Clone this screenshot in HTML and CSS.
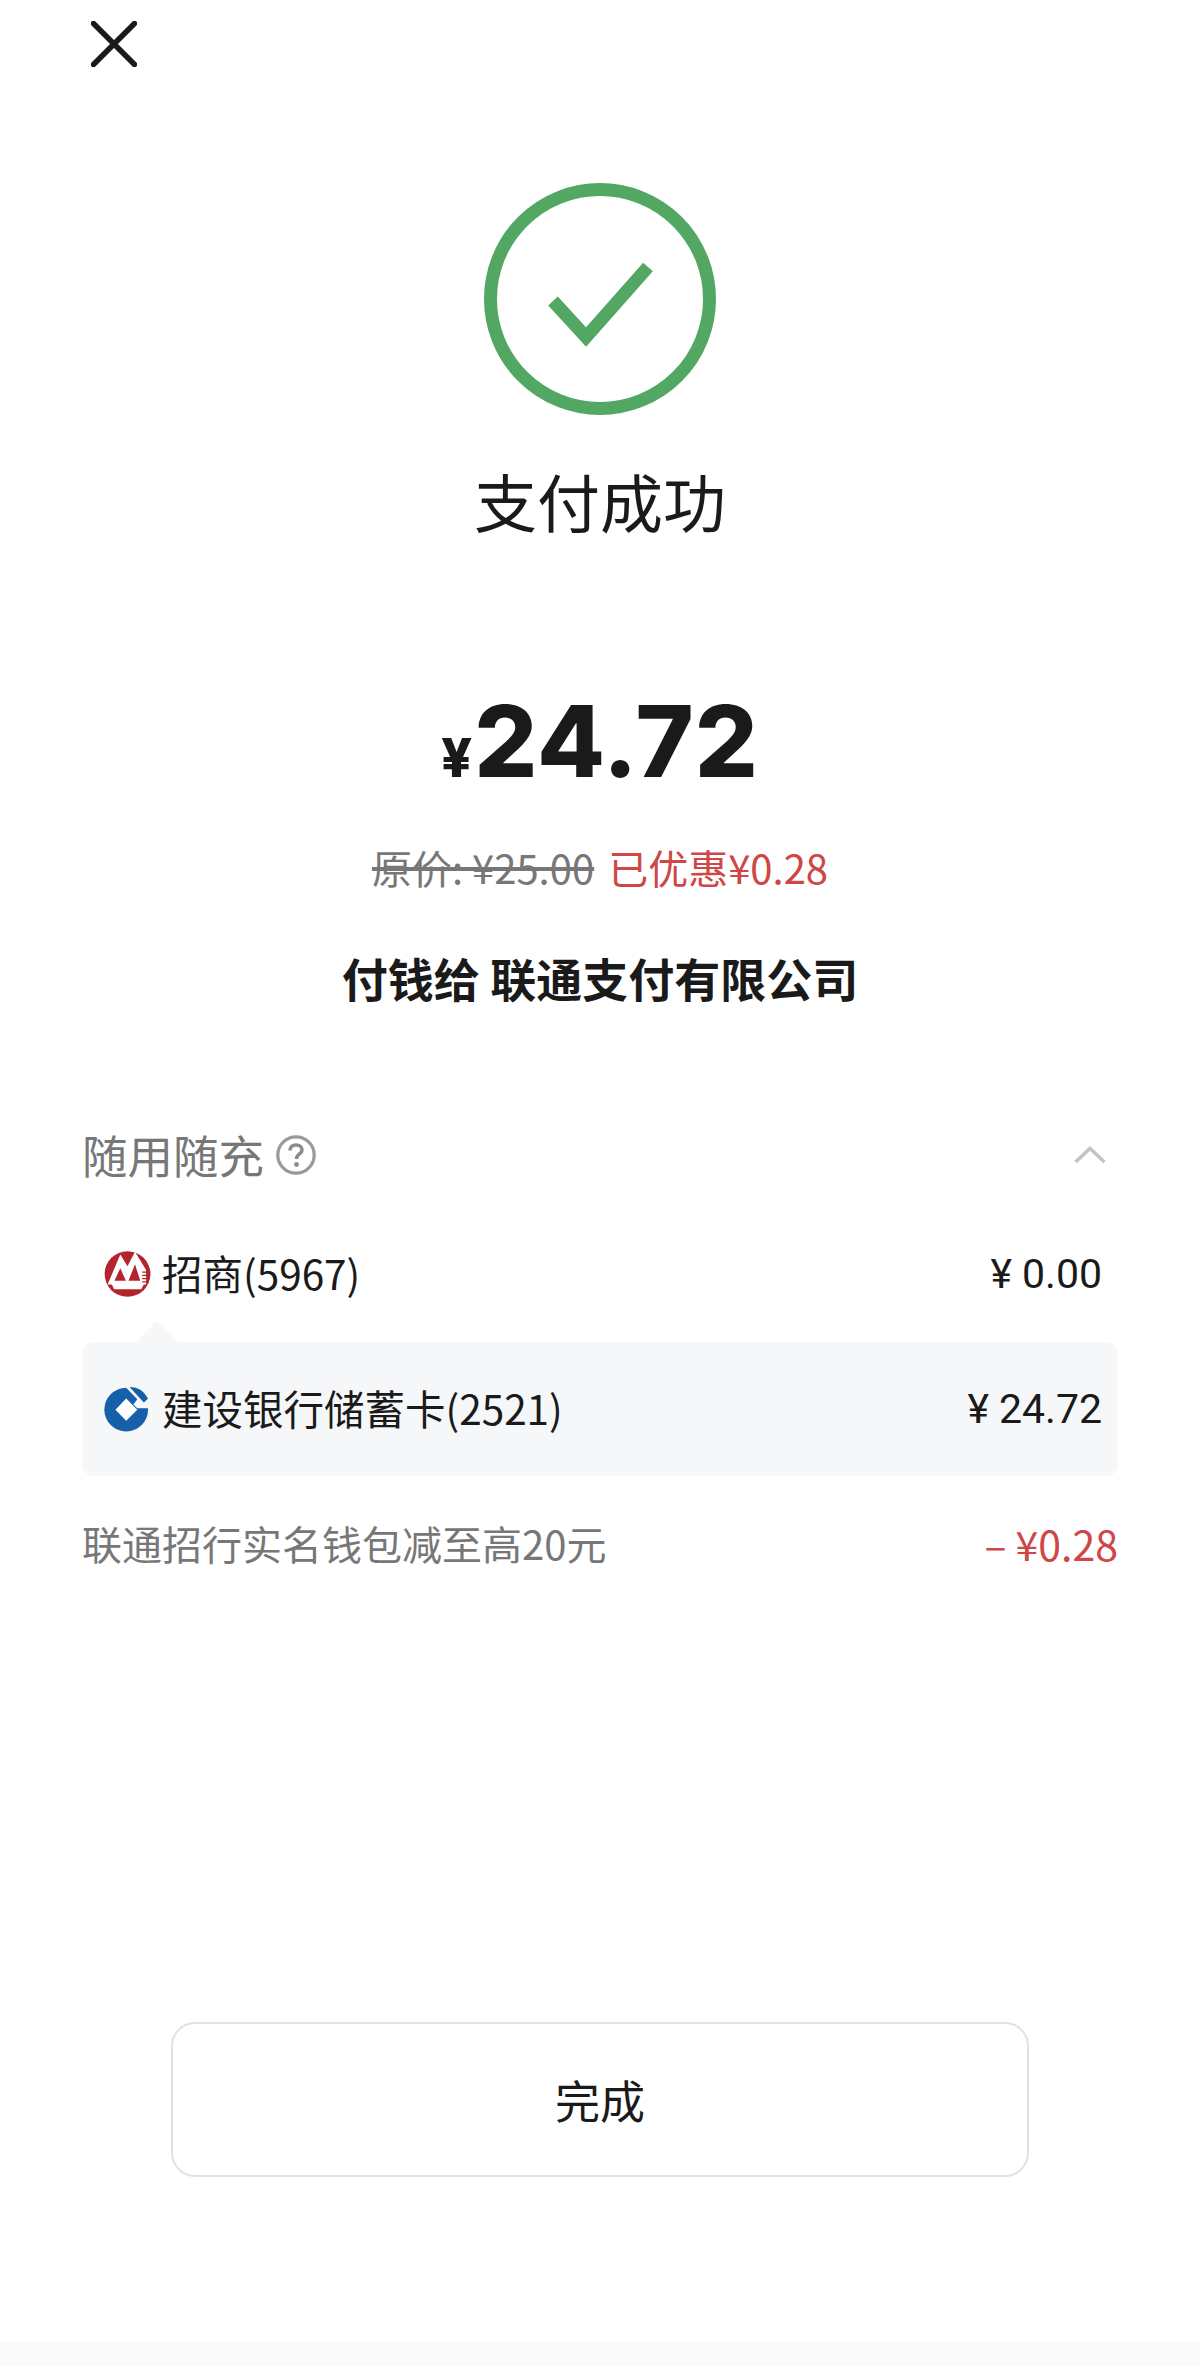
FILE: index.html
```html
<!DOCTYPE html>
<html lang="zh-CN">
<head>
    <meta charset="UTF-8">
    <meta name="viewport" content="width=device-width, initial-scale=1.0">
    <title>支付成功</title>
    <link rel="stylesheet" href="styles.css">
</head>
<body>
    <div class="page">
        <div class="close">
            <svg width="46" height="46" viewBox="0 0 46 46">
                <path d="M2.5 2.5L43.5 43.5M43.5 2.5L2.5 43.5" fill="none" stroke="#1a1a1a" stroke-width="5.5" stroke-linecap="round"/>
            </svg>
        </div>

        <div class="success">
            <svg width="232" height="232" viewBox="0 0 232 232">
                <circle cx="116" cy="116" r="109.5" fill="none" stroke="#52a862" stroke-width="13"/>
                <path d="M69 118L102 154L164 84" fill="none" stroke="#52a862" stroke-width="13"/>
            </svg>
        </div>
        <h1 class="title">支付成功</h1>

        <div class="amount"><span class="yen">¥</span><span class="num">24.72</span></div>
        <p class="price"><span class="old">原价: ¥25.00</span><span class="saved">已优惠¥0.28</span></p>
        <p class="payee">付钱给 联通支付有限公司</p>

        <div class="section">
            <div class="section-head">
                <div class="section-name">
                    <span>随用随充</span>
                    <svg width="40" height="40" viewBox="0 0 40 40">
                        <circle cx="20" cy="20" r="18.2" fill="none" stroke="#999" stroke-width="3.2"/>
                        <path d="M14 15.5C14 12 16.6 10 20 10C23.4 10 26 12 26 15C26 19 20.5 19 20.5 24" fill="none" stroke="#8c8c8c" stroke-width="3.6"/>
                        <circle cx="20.5" cy="29.5" r="2.4" fill="#8c8c8c"/>
                    </svg>
                </div>
                <svg class="chevron" width="32" height="18" viewBox="0 0 32 18">
                    <path d="M1.5 16L16 2.5L30.5 16" fill="none" stroke="#c4c4c4" stroke-width="3.6"/>
                </svg>
            </div>

            <div class="pay-row">
                <div class="bank">
                    <svg class="logo" width="47" height="46" viewBox="25 22 144 140">
                        <circle cx="97" cy="92" r="70" fill="#b3242f"/>
                        <path d="M36 124L75 32L97 68L120 24L154 80V124Z" fill="#fff"/>
                        <path d="M48 122H148L139 139H56Z" fill="#fff"/>
                        <path d="M57 113L75 74L92 113ZM100 113L120 62L136 113Z" fill="#b3242f"/>
                        <path d="M142 86H167M142 96H167M142 106H165M142 116H162" stroke="#b3242f" stroke-width="4"/>
                    </svg>
                    <span>招商(5967)</span>
                </div>
                <span class="money"><i>¥</i>0.00</span>
            </div>

            <div class="pay-row selected">
                <div class="bank">
                    <svg class="logo" width="47" height="46" viewBox="25 22 144 140">
                        <circle cx="93" cy="94" r="67" fill="#1560a8"/>
                        <path d="M93 60L127 94L93 128L60 94Z" fill="#fff"/>
                        <path d="M90 24L127 62L115 78L127 90H170V0H90Z" fill="#f6f7f9"/>
                        <path d="M104 25Q140 24 160 60L147 72Z" fill="#1560a8"/>
                    </svg>
                    <span>建设银行储蓄卡(2521)</span>
                </div>
                <span class="money"><i>¥</i>24.72</span>
            </div>

            <div class="discount">
                <span>联通招行实名钱包减至高20元</span>
                <span class="minus">– ¥0.28</span>
            </div>
        </div>

        <button class="done">完成</button>
        <div class="bottom-bar"></div>
    </div>
</body>
</html>
```

FILE: styles.css
```css
* {
    box-sizing: border-box;
}
body {
    margin: 0;
    background-color: #fff;
    color: #1a1a1a;
    font-family: "Noto Sans CJK SC", "Liberation Sans", sans-serif;
}
p, h1 {
    margin: 0;
    font-weight: normal;
}
.page {
    width: 1200px;
    height: 2365px;
    display: flex;
    flex-direction: column;
    align-items: center;
}
.close {
    align-self: flex-start;
    margin: 21px 0 0 91px;
    height: 46px;
}
.success {
    margin-top: 116px;
    height: 232px;
}
.title {
    margin-top: 45px;
    font-size: 63px;
    line-height: 80px;
}
.amount {
    margin-top: 151px;
    display: flex;
    align-items: baseline;
    height: 100px;
    font-family: Inter, "Liberation Sans", sans-serif;
    font-weight: 800;
}
.yen {
    font-size: 54px;
    margin-right: 2px;
}
.num {
    font-size: 99px;
    line-height: 100px;
    letter-spacing: 1px;
}
.price {
    margin-top: 48px;
    font-size: 40px;
    line-height: 56px;
    display: flex;
    gap: 14px;
}
.old {
    color: #777;
    text-decoration: line-through;
}
.saved {
    color: #cf4646;
}
.payee {
    margin-top: 52px;
    font-size: 46px;
    line-height: 60px;
    font-weight: 700;
}
.section {
    width: 1036px;
    margin-top: 118px;
}
.section-head {
    height: 60px;
    padding: 0 12px 0 0;
    display: flex;
    justify-content: space-between;
    align-items: center;
}
.section-name {
    display: flex;
    align-items: center;
    gap: 12px;
    font-size: 45.5px;
    color: #777;
}
.section-name span {
    margin-top: -3px;
}
.pay-row {
    height: 134px;
    padding: 0 16px 0 22px;
    display: flex;
    justify-content: space-between;
    align-items: center;
    font-size: 40.5px;
}
.pay-row:nth-child(2) {
    margin-top: 22px;
}
.pay-row.selected {
    position: relative;
    margin-top: 1px;
    background-color: #f6f7f9;
    border-radius: 12px;
}
/* small notch pointing at the bank above */
.pay-row.selected::before {
    content: "";
    position: absolute;
    left: 60px;
    top: -15px;
    width: 30px;
    height: 30px;
    background-color: #f6f7f9;
    transform: rotate(45deg);
    border-radius: 4px;
    z-index: -1;
}
.bank {
    display: flex;
    align-items: center;
    gap: 11px;
}
.bank span {
    margin-top: -4px;
}
.money {
    font-family: Roboto, "Liberation Sans", sans-serif;
    font-size: 41px;
}
.money i {
    font-style: normal;
    margin-right: 10px;
}
.discount {
    margin-top: 38px;
    height: 60px;
    display: flex;
    justify-content: space-between;
    align-items: center;
    font-size: 40px;
    color: #777;
}
.discount span {
    margin-top: -3px;
}
.minus {
    color: #cf4646;
    font-size: 41px;
}
.done {
    margin-top: auto;
    width: 858px;
    height: 155px;
    background-color: #fff;
    border: 2px solid #e2e2e2;
    border-radius: 24px;
    font-family: inherit;
    font-size: 45px;
    color: #1a1a1a;
}
.bottom-bar {
    margin-top: 166px;
    width: 100%;
    height: 22px;
    background-color: #fafafa;
}
```
